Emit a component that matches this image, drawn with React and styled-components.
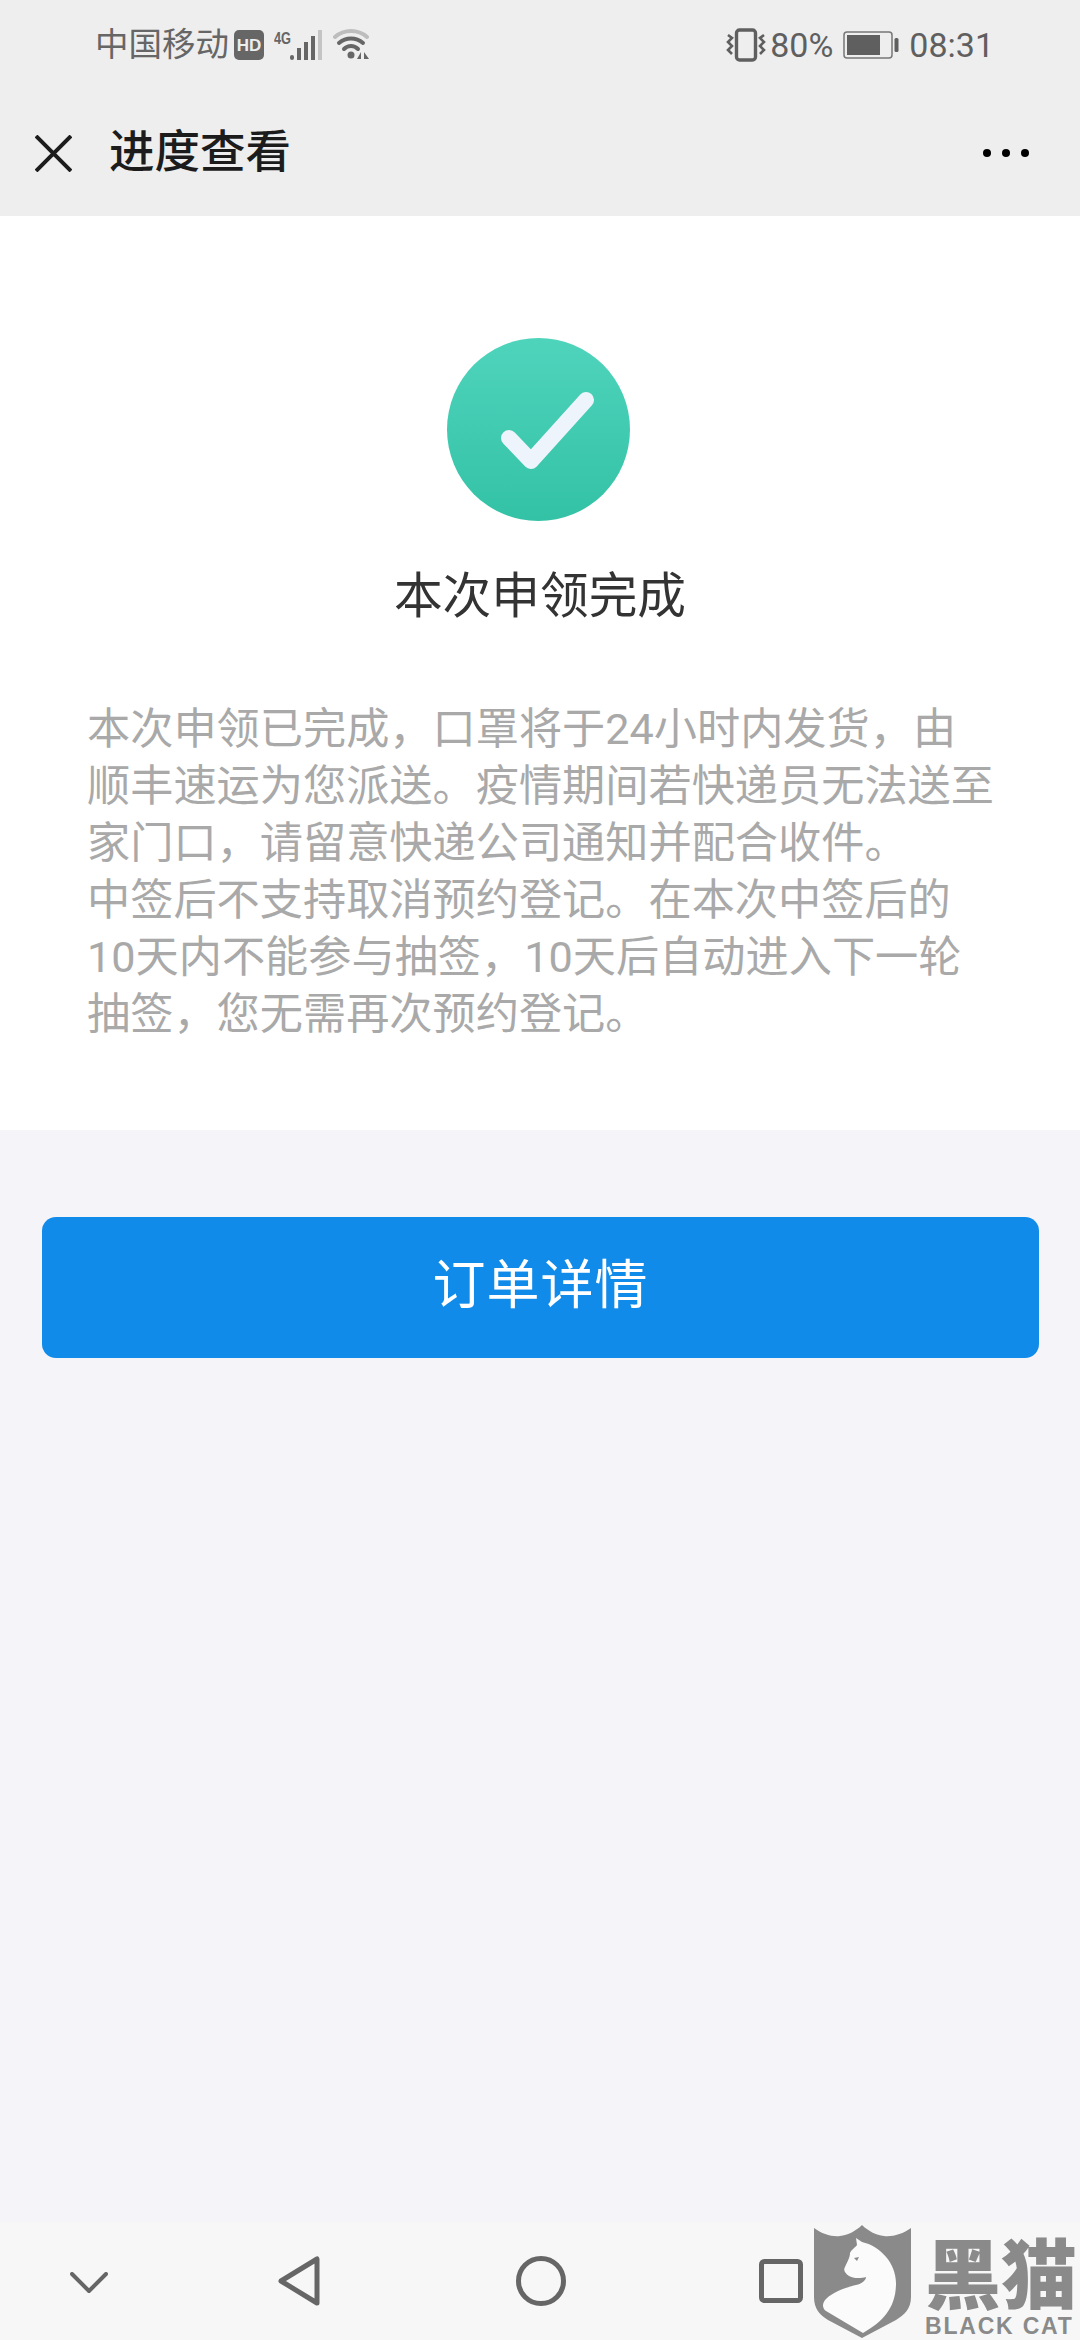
import styled, { createGlobalStyle } from "styled-components";

const GlobalStyle = createGlobalStyle`
  html, body {
    margin: 0;
    padding: 0;
    background: #f4f4f9;
    font-family: "Roboto", "Noto Sans CJK SC", sans-serif;
  }
`;

const Page = styled.div`
  position: relative;
  width: 1080px;
  height: 2340px;
  display: flex;
  flex-direction: column;
  overflow: hidden;
  background: #f4f4f9;
`;

const TopArea = styled.header`
  height: 216px;
  background: #eeeeee;
  display: flex;
  flex-direction: column;
`;

const StatusBar = styled.div`
  height: 90px;
  display: flex;
  align-items: center;
  justify-content: space-between;
  padding: 0 86px 0 95px;
  color: #666666;
`;

const StatusGroup = styled.div`
  display: flex;
  align-items: center;
`;

const Carrier = styled.span`
  font-size: 33.500px;
  line-height: 40px;
  margin-right: 5px;
`;

const StatusText = styled.span`
  font-size: 34px;
  line-height: 40px;
  color: #5f5f5f;
  margin: ${(p) => p.$margin || "0"};
`;

const TitleBar = styled.div`
  flex: 1;
  display: flex;
  align-items: center;
  padding: 0 49px 0 35px;
`;

const Title = styled.h1`
  flex: 1;
  margin: 0 0 0 37px;
  font-size: 45.500px;
  line-height: 60px;
  font-weight: 500;
  color: #1c1c1c;
`;

const Panel = styled.section`
  height: 914px;
  background: #ffffff;
  display: flex;
  flex-direction: column;
  align-items: center;
  padding-top: 122px;
  box-sizing: border-box;
`;

const SuccessWrap = styled.div`
  display: flex;
  margin-right: 3px;
`;

const Heading = styled.h2`
  margin: 41px 0 0;
  font-size: 48.700px;
  line-height: 70px;
  font-weight: 400;
  color: #333333;
`;

const Body = styled.div`
  align-self: stretch;
  margin-top: 69px;
  padding-left: 87px;
  font-size: 43.200px;
  line-height: 57px;
  color: #a9a9a9;
`;

const Line = styled.div`
  white-space: nowrap;
`;

const Content = styled.main`
  flex: 1;
  padding: 87px 41px 0 42px;
`;

const PrimaryButton = styled.button`
  display: block;
  width: 100%;
  height: 141px;
  border: none;
  border-radius: 14px;
  padding: 0 0 14px;
  background: #118bea;
  color: #ffffff;
  font-family: inherit;
  font-size: 53px;
  font-weight: 400;
  letter-spacing: 1px;
`;

const NavBar = styled.nav`
  height: 118px;
  background: #f7f7f7;
  display: flex;
  align-items: flex-start;
  padding-top: 34px;
  box-sizing: border-box;
`;

const NavSlot = styled.div`
  display: flex;
  margin-left: ${(p) => p.$left}px;
  margin-top: ${(p) => p.$top || 0}px;
`;

const Watermark = styled.div`
  position: absolute;
  left: 814px;
  top: 2225px;
  display: flex;
  color: #8a8a8a;
`;

const MarkText = styled.div`
  margin-left: 14px;
  display: flex;
  flex-direction: column;
  align-items: flex-start;
`;

const MarkName = styled.div`
  font-family: "Noto Sans CJK SC", sans-serif;
  font-size: 76px;
  line-height: 90px;
  font-weight: 900;
`;

const MarkLatin = styled.div`
  font-family: "Liberation Sans", sans-serif;
  font-size: 23px;
  line-height: 22px;
  font-weight: 700;
  letter-spacing: 1.800px;
`;

const CloseIcon = () => (
  <svg width="37" height="37" viewBox="0 0 37 37" fill="none" stroke="#1c1c1c" strokeWidth="4">
    <path d="M1 1L36 36M36 1L1 36" />
  </svg>
);

const MoreIcon = () => (
  <svg width="48" height="10" viewBox="0 0 48 10" fill="#000">
    <circle cx="4" cy="5" r="4" />
    <circle cx="23" cy="5" r="4" />
    <circle cx="42" cy="5" r="4" />
  </svg>
);

const HdBadge = () => (
  <svg width="30" height="30" viewBox="0 0 30 30">
    <rect width="30" height="30" rx="5" fill="#666" />
    <text x="15" y="21" textAnchor="middle" fontFamily="Liberation Sans" fontWeight="700" fontSize="17" fill="#eee">HD</text>
  </svg>
);

const SignalIcon = () => (
  <svg width="50" height="32" viewBox="0 0 50 32" style={{ marginLeft: 10 }}>
    <text x="0" y="15" fontFamily="Liberation Sans" fontWeight="700" fontSize="16" fill="#666" textLength="17" lengthAdjust="spacingAndGlyphs">4G</text>
    <rect x="16" y="26" width="4" height="5" rx="2" fill="#666" />
    <rect x="23" y="19" width="4" height="12" fill="#666" />
    <rect x="30" y="13" width="4" height="18" fill="#666" />
    <rect x="37" y="7" width="4" height="24" fill="#666" />
    <rect x="44" y="1" width="4" height="30" fill="#c4c4c4" />
  </svg>
);

const WifiIcon = () => (
  <svg width="38" height="32" viewBox="0 0 38 32" fill="none" strokeLinecap="round" style={{ marginLeft: 9 }}>
    <path d="M2 8C11 0 25 0 34 8" stroke="#bdbdbd" strokeWidth="4" />
    <path d="M6 14C13 8 23 8 30 14" stroke="#666" strokeWidth="4" />
    <path d="M11 20C15 16 21 16 25 20" stroke="#666" strokeWidth="4" />
    <circle cx="18" cy="26" r="3.500" fill="#666" />
    <path d="M28 23V30H24ZM31 23V30H36Z" fill="#666" />
  </svg>
);

const VibrateIcon = () => (
  <svg width="40" height="34" viewBox="0 0 40 34" fill="none" stroke="#5f5f5f">
    <rect x="10.500" y="2" width="19" height="30" rx="3" strokeWidth="3.400" />
    <path d="M2 7L6 10L2 14L6 18L2 22L6 26" strokeWidth="2.600" />
    <path d="M38 7L34 10L38 14L34 18L38 22L34 26" strokeWidth="2.600" />
  </svg>
);

const BatteryIcon = () => (
  <svg width="56" height="28" viewBox="0 0 56 28" style={{ marginLeft: 10 }}>
    <rect x="1" y="1" width="48" height="26" rx="3" fill="none" stroke="#777" strokeWidth="1.500" />
    <rect x="4" y="4" width="33" height="20" fill="#5f5f5f" />
    <rect x="51.500" y="7" width="4" height="14" rx="1.500" fill="#5f5f5f" />
  </svg>
);

const SuccessIcon = () => (
  <svg width="183" height="183" viewBox="0 0 183 183" fill="none">
    <defs>
      <linearGradient id="successFill" x1="0" y1="0" x2="0" y2="1">
        <stop offset="0" stopColor="#4fd4bc" />
        <stop offset="1" stopColor="#33c2a6" />
      </linearGradient>
    </defs>
    <circle cx="91.500" cy="91.500" r="91.500" fill="url(#successFill)" />
    <path d="M62 100L84 123L139 62" stroke="#eef4fb" strokeWidth="16" strokeLinecap="round" strokeLinejoin="round" />
  </svg>
);

const ChevronIcon = () => (
  <svg width="38" height="22" viewBox="0 0 38 22" fill="none" stroke="#666" strokeWidth="4" strokeLinecap="round" strokeLinejoin="round">
    <path d="M2 2L19 19L36 2" />
  </svg>
);

const BackIcon = () => (
  <svg width="42" height="50" viewBox="0 0 42 50" fill="none" stroke="#666" strokeWidth="5" strokeLinejoin="round">
    <path d="M39 3V47L3 25Z" />
  </svg>
);

const HomeIcon = () => (
  <svg width="50" height="50" viewBox="0 0 50 50" fill="none" stroke="#666" strokeWidth="5">
    <circle cx="25" cy="25" r="22.500" />
  </svg>
);

const RecentIcon = () => (
  <svg width="44" height="44" viewBox="0 0 44 44" fill="none" stroke="#666" strokeWidth="5">
    <rect x="2.500" y="2.500" width="39" height="39" rx="3" />
  </svg>
);

const CatShield = () => (
  <svg width="97" height="113" viewBox="0 0 97 113">
    <path d="M0 3C8 9 18 12 26 11C34 10 42 6 48 0C54 6 62 10 70 11C78 12 89 9 97 3V72C97 84 90 90 82 95L48 113L14 95C6 90 0 84 0 72Z" fill="#8a8a8a" />
    <path d="M42 13L48 17C66 21 82 38 82 58C82 82 70 96 49 108L12 86C8 83 8 78 12 74C20 66 34 62 42 60C48 59 52 55 52 52C46 54 38 53 35 51C31 48 29 45 31 42C33 37 36 33 36 28C38 24 42 22 43 20Z" fill="#fbfbfb" />
    <path d="M40 33L45 32L43 36Z" fill="#8a8a8a" />
  </svg>
);

const bodyLines = [
  "本次申领已完成，口罩将于24小时内发货，由",
  "顺丰速运为您派送。疫情期间若快递员无法送至",
  "家门口，请留意快递公司通知并配合收件。",
  "中签后不支持取消预约登记。在本次中签后的",
  "10天内不能参与抽签，10天后自动进入下一轮",
  "抽签，您无需再次预约登记。",
];

const App = () => {
  return (
    <Page>
      <GlobalStyle />
      <TopArea>
        <StatusBar>
          <StatusGroup>
            <Carrier>中国移动</Carrier>
            <HdBadge />
            <SignalIcon />
            <WifiIcon />
          </StatusGroup>
          <StatusGroup>
            <VibrateIcon />
            <StatusText $margin="0 0 0 4px">80%</StatusText>
            <BatteryIcon />
            <StatusText $margin="0 0 0 10px">08:31</StatusText>
          </StatusGroup>
        </StatusBar>
        <TitleBar>
          <CloseIcon />
          <Title>进度查看</Title>
          <MoreIcon />
        </TitleBar>
      </TopArea>
      <Panel>
        <SuccessWrap>
          <SuccessIcon />
        </SuccessWrap>
        <Heading>本次申领完成</Heading>
        <Body>
          {bodyLines.map((text) => (
            <Line key={text}>{text}</Line>
          ))}
        </Body>
      </Panel>
      <Content>
        <PrimaryButton>订单详情</PrimaryButton>
      </Content>
      <NavBar>
        <NavSlot $left={70} $top={16}><ChevronIcon /></NavSlot>
        <NavSlot $left={170}><BackIcon /></NavSlot>
        <NavSlot $left={196}><HomeIcon /></NavSlot>
        <NavSlot $left={193} $top={3}><RecentIcon /></NavSlot>
      </NavBar>
      <Watermark>
        <CatShield />
        <MarkText>
          <MarkName>黑猫</MarkName>
          <MarkLatin>BLACK CAT</MarkLatin>
        </MarkText>
      </Watermark>
    </Page>
  );
};

export default App;
